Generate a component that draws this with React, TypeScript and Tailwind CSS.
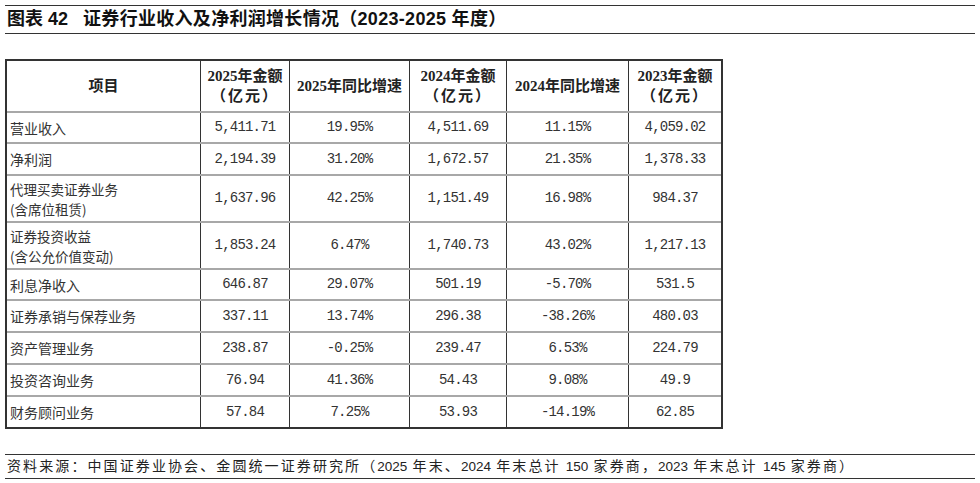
import React from "react";

const cols = "grid grid-cols-[194px_89px_120px_97px_122px_92px]";

type Row = { name: string[]; vals: string[]; h: string };

const rows: Row[] = [
  { name: ["营业收入"], vals: ["5,411.71", "19.95%", "4,511.69", "11.15%", "4,059.02"], h: "h-[31px]" },
  { name: ["净利润"], vals: ["2,194.39", "31.20%", "1,672.57", "21.35%", "1,378.33"], h: "h-[32px]" },
  { name: ["代理买卖证券业务", "(含席位租赁)"], vals: ["1,637.96", "42.25%", "1,151.49", "16.98%", "984.37"], h: "h-[47px]" },
  { name: ["证券投资收益", "(含公允价值变动)"], vals: ["1,853.24", "6.47%", "1,740.73", "43.02%", "1,217.13"], h: "h-[47px]" },
  { name: ["利息净收入"], vals: ["646.87", "29.07%", "501.19", "-5.70%", "531.5"], h: "h-[31px]" },
  { name: ["证券承销与保荐业务"], vals: ["337.11", "13.74%", "296.38", "-38.26%", "480.03"], h: "h-[32px]" },
  { name: ["资产管理业务"], vals: ["238.87", "-0.25%", "239.47", "6.53%", "224.79"], h: "h-[32px]" },
  { name: ["投资咨询业务"], vals: ["76.94", "41.36%", "54.43", "9.08%", "49.9"], h: "h-[32px]" },
  { name: ["财务顾问业务"], vals: ["57.84", "7.25%", "53.93", "-14.19%", "62.85"], h: "h-[30px]" },
];

const cjk = "font-['Noto_Sans_CJK_SC',sans-serif]";
const num = "font-['Liberation_Mono','Noto_Sans_CJK_SC',monospace] text-[14px] tracking-[-0.8px]";
const head = "font-['Liberation_Serif','Noto_Sans_CJK_SC',serif] font-bold text-[15px] leading-[20px] text-[#222]";

function Header() {
  const unit = <span className="tracking-[2px]">（亿元）</span>;
  const h2 = (a: string, last = false) => (
    <div className={`flex flex-col items-center justify-center ${last ? "" : "border-r border-[#333]"}`}>
      <span>{a}</span>
      {unit}
    </div>
  );
  const h1 = (a: string) => (
    <div className="flex items-center justify-center border-r border-[#333]">
      <span>{a}</span>
    </div>
  );
  return (
    <div className={`${cols} h-[52px] border-b-2 border-[#a8a8a8] ${head}`}>
      {h1("项目")}
      {h2("2025年金额")}
      {h1("2025年同比增速")}
      {h2("2024年金额")}
      {h1("2024年同比增速")}
      {h2("2023年金额", true)}
    </div>
  );
}

export default function App() {
  const footNum = "font-['Liberation_Sans',sans-serif] tracking-normal text-[13.5px]";
  return (
    <div className="w-[980px] h-[483px] bg-white px-[5px] pt-[5px] text-[#222]">
      <div className="flex h-[29px] items-center border-t-[1.5px] border-b-[1.5px] border-[#333] pl-[2px] font-['Liberation_Sans','Noto_Sans_CJK_SC',sans-serif] text-[18px] font-bold text-[#111]">
        <span>图表 42</span>
        <span className="ml-[15px] tracking-[0.3px]">证券行业收入及净利润增长情况（2023-2025 年度）</span>
      </div>

      <div className="mt-[25px] w-[718px] border-2 border-[#333]">
        <Header />
        {rows.map((r, i) => (
          <div
            key={i}
            className={`${cols} ${r.h} ${i < rows.length - 1 ? "border-b-2 border-[#a8a8a8]" : ""} text-[#333]`}
          >
            <div
              className={`flex flex-col justify-center border-r border-[#333] pl-[3px] ${cjk} ${
                r.name.length > 1 ? "text-[13.5px] leading-[20px]" : "text-[14px] leading-[20px]"
              }`}
            >
              {r.name.map((n, j) => (
                <span key={j}>{n}</span>
              ))}
            </div>
            {r.vals.map((v, j) => (
              <div
                key={j}
                className={`flex items-center justify-center ${num} ${j < 4 ? "border-r border-[#333]" : ""}`}
              >
                {v}
              </div>
            ))}
          </div>
        ))}
      </div>

      <div className="mt-[25px] flex h-[25px] items-center border-t-[1.5px] border-b-[1.5px] border-[#333] pl-[2px] font-['Noto_Sans_CJK_SC',sans-serif] text-[14px] tracking-[2.1px] text-[#222]">
        <span>
          资料来源：中国证券业协会、金圆统一证券研究所（<span className={footNum}>2025</span> 年末、
          <span className={footNum}>2024</span> 年末总计 <span className={footNum}>150</span> 家券商，
          <span className={footNum}>2023</span> 年末总计 <span className={footNum}>145</span> 家券商）
        </span>
      </div>
    </div>
  );
}
